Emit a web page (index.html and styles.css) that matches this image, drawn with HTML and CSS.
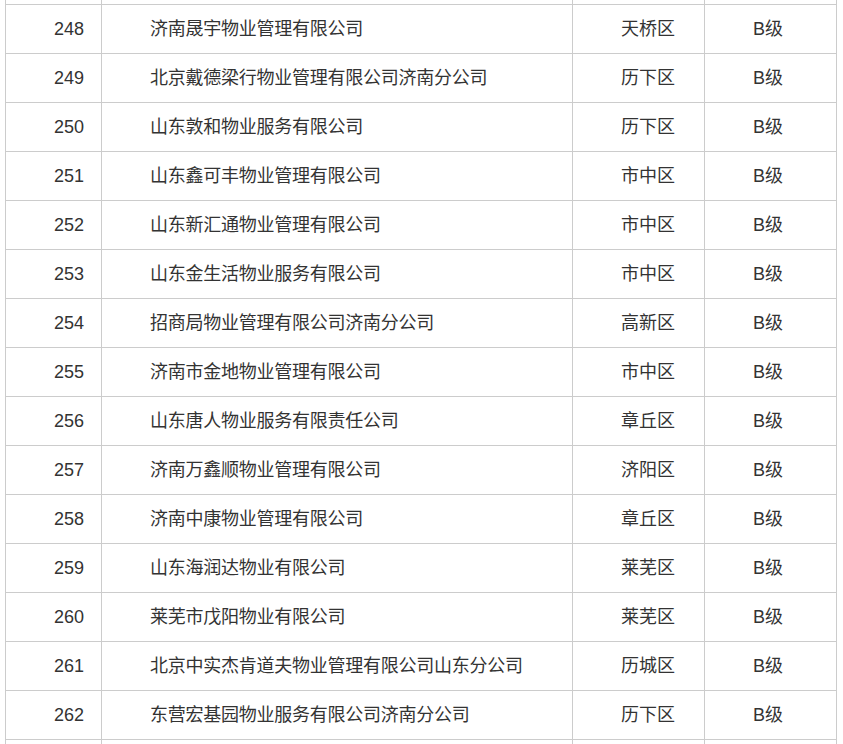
FILE: index.html
```html
<!DOCTYPE html>
<html lang="zh-CN">
<head>
<meta charset="utf-8">
<title>物业企业名单</title>
<link rel="stylesheet" href="styles.css">
</head>
<body>
<table class="list">
  <colgroup>
    <col class="c-no"><col class="c-name"><col class="c-area"><col class="c-grade">
  </colgroup>
  <tbody>
    <tr class="edge"><td></td><td></td><td></td><td></td></tr>
    <tr><td>248</td><td class="name">济南晟宇物业管理有限公司</td><td>天桥区</td><td>B级</td></tr>
    <tr><td>249</td><td class="name">北京戴德梁行物业管理有限公司济南分公司</td><td>历下区</td><td>B级</td></tr>
    <tr><td>250</td><td class="name">山东敦和物业服务有限公司</td><td>历下区</td><td>B级</td></tr>
    <tr><td>251</td><td class="name">山东鑫可丰物业管理有限公司</td><td>市中区</td><td>B级</td></tr>
    <tr><td>252</td><td class="name">山东新汇通物业管理有限公司</td><td>市中区</td><td>B级</td></tr>
    <tr><td>253</td><td class="name">山东金生活物业服务有限公司</td><td>市中区</td><td>B级</td></tr>
    <tr><td>254</td><td class="name">招商局物业管理有限公司济南分公司</td><td>高新区</td><td>B级</td></tr>
    <tr><td>255</td><td class="name">济南市金地物业管理有限公司</td><td>市中区</td><td>B级</td></tr>
    <tr><td>256</td><td class="name">山东唐人物业服务有限责任公司</td><td>章丘区</td><td>B级</td></tr>
    <tr><td>257</td><td class="name">济南万鑫顺物业管理有限公司</td><td>济阳区</td><td>B级</td></tr>
    <tr><td>258</td><td class="name">济南中康物业管理有限公司</td><td>章丘区</td><td>B级</td></tr>
    <tr><td>259</td><td class="name">山东海润达物业有限公司</td><td>莱芜区</td><td>B级</td></tr>
    <tr><td>260</td><td class="name">莱芜市戊阳物业有限公司</td><td>莱芜区</td><td>B级</td></tr>
    <tr><td>261</td><td class="name">北京中实杰肯道夫物业管理有限公司山东分公司</td><td>历城区</td><td>B级</td></tr>
    <tr><td>262</td><td class="name">东营宏基园物业服务有限公司济南分公司</td><td>历下区</td><td>B级</td></tr>
    <tr class="edge"><td></td><td></td><td></td><td></td></tr>
  </tbody>
</table>
</body>
</html>
```
FILE: styles.css
```css
html, body {
  margin: 0;
  padding: 0;
  background: #fff;
}
body {
  overflow: hidden;
  font-family: "Liberation Sans", "Noto Sans CJK SC", sans-serif;
  font-size: 18px;
  color: #333;
}
.list {
  border-collapse: collapse;
  table-layout: fixed;
  width: 832px;
  margin: -45px 0 0 5px;
}
.c-no { width: 96px; }
.c-name { width: 471px; }
.c-area { width: 132px; }
.c-grade { width: 132px; }
.list td {
  border: 1px solid #cccccc;
  height: 48px;
  padding: 0 0 0 48px;
  line-height: 24px;
  vertical-align: middle;
  text-align: left;
  white-space: nowrap;
}
.list td.name {
  letter-spacing: -0.25px;
}
```
